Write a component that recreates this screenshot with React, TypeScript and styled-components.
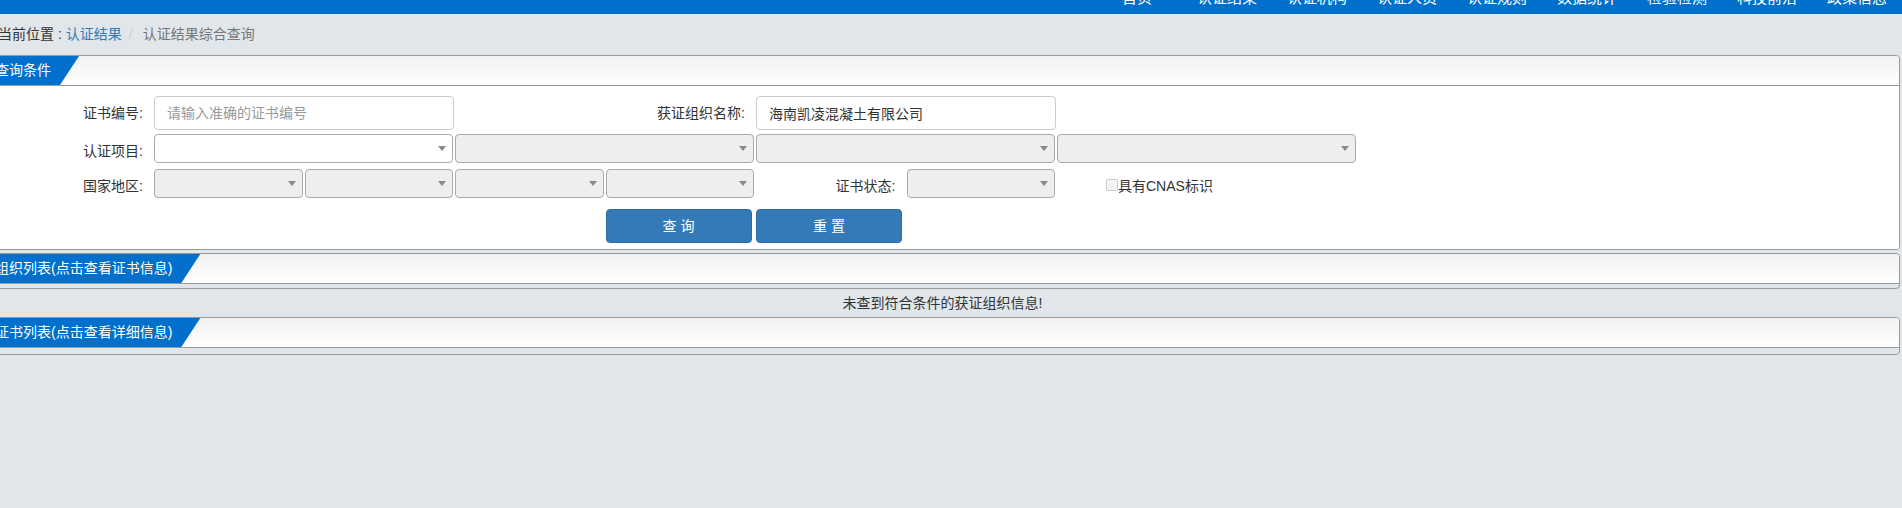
import React from "react";
import styled, { createGlobalStyle } from "styled-components";

const GlobalStyle = createGlobalStyle`
  html, body { margin: 0; padding: 0; background: #e1e6ea; overflow: hidden; }
  body {
    font-family: "Liberation Sans", "Noto Sans CJK SC", sans-serif;
    font-size: 14px;
    line-height: 20px;
    color: #333;
  }
  * { box-sizing: border-box; }
`;

const TopBar = styled.header`
  height: 14px;
  background: #0070cc;
  display: flex;
  justify-content: flex-end;
  overflow: hidden;
`;

const NavItem = styled.a`
  flex: 0 0 90px;
  text-align: center;
  color: #fff;
  font-size: 15px;
  line-height: 20px;
  margin-top: -12px;
  text-decoration: none;
  white-space: nowrap;
`;

const Wrapper = styled.div`
  margin: 0 2px 0 -15px;
`;

const Breadcrumb = styled.nav`
  height: 41px;
  padding: 0 0 2px 13px;
  display: flex;
  align-items: center;
  white-space: nowrap;
`;

const CrumbLead = styled.span`
  color: #333;
  margin-right: 4px;
`;

const CrumbLink = styled.a`
  color: #337ab7;
  text-decoration: none;
`;

const CrumbSep = styled.span`
  color: #ccc;
  padding: 0 5px 0 7px;
  margin-right: 5px;
`;

const CrumbCurrent = styled.span`
  color: #777;
`;

const Panel = styled.section<{ $gap?: number }>`
  border: 1px solid #999;
  border-radius: 4px;
  margin-top: ${(p) => p.$gap ?? 0}px;
  overflow: hidden;
`;

const PanelHeader = styled.div`
  height: 30px;
  border-bottom: 1px solid #999;
  background: linear-gradient(#f1f1f1, #fff);
  display: flex;
`;

const Tab = styled.div`
  background: #0070cc;
  color: #fff;
  line-height: 29px;
  height: 29px;
  padding: 0 28px 0 9px;
  white-space: nowrap;
  clip-path: polygon(0 0, 100% 0, calc(100% - 19px) 100%, 0 100%);
`;

const FormBody = styled.div`
  background: #fff;
  padding: 10px 0 6px 17.5px;
`;

const EmptyBody = styled.div<{ $h: number }>`
  height: ${(p) => p.$h}px;
`;

const FormRow = styled.div<{ $h: number; $mt?: number }>`
  display: grid;
  grid-template-columns: repeat(9, 150.5px);
  height: ${(p) => p.$h}px;
  margin-top: ${(p) => p.$mt ?? 0}px;
  align-items: start;
`;

const Cell = styled.div<{ $col: number; $span?: number }>`
  grid-column: ${(p) => p.$col} / span ${(p) => p.$span ?? 1};
  display: flex;
`;

const Label = styled.label<{ $col: number; $span?: number }>`
  grid-column: ${(p) => p.$col} / span ${(p) => p.$span ?? 1};
  text-align: right;
  padding: 7px 11px 0 0;
  line-height: 20px;
  color: #333;
  white-space: nowrap;
`;

const TextInput = styled.input`
  width: calc(100% - 1px);
  height: 34px;
  border: 1px solid #ccc;
  border-radius: 4px;
  padding: 6px 12px;
  font: inherit;
  color: #333;
  background: #fff;
  outline: none;
  &::placeholder { color: #999; }
`;

const SelectBox = styled.div<{ $disabled?: boolean }>`
  width: calc(100% - 2px);
  height: 29px;
  border: 1px solid #aaa;
  border-radius: 4px;
  background: ${(p) => (p.$disabled ? "#eee" : "#fff")};
  display: flex;
  align-items: center;
  justify-content: flex-end;
  padding-right: 6px;
`;

const Caret = styled.span`
  width: 0;
  height: 0;
  border-left: 4px solid transparent;
  border-right: 4px solid transparent;
  border-top: 5px solid #888;
`;

const CheckWrap = styled.label`
  grid-column: 8 / span 2;
  display: flex;
  align-items: flex-start;
  padding: 7px 0 0 49px;
  line-height: 20px;
  white-space: nowrap;
  color: #333;
`;

const CheckBox = styled.span`
  width: 12px;
  height: 12px;
  margin-top: 3px;
  border: 1px solid #c8c8c8;
  border-radius: 2px;
  background: #f4f4f4;
`;

const Button = styled.button`
  width: 146px;
  height: 34px;
  background: #337ab7;
  border: 1px solid #2e6da4;
  border-radius: 4px;
  color: #fff;
  font: inherit;
  padding: 0;
  cursor: pointer;
`;

const Message = styled.div`
  height: 28px;
  line-height: 28px;
  text-align: center;
  color: #333;
`;

const Select = ({ disabled }: { disabled?: boolean }) => (
  <SelectBox $disabled={disabled}>
    <Caret />
  </SelectBox>
);

const navItems = ["首页", "认证结果", "认证机构", "认证人员", "认证规则", "数据统计", "检验检测", "科技前沿", "政策信息"];

export default function App() {
  return (
    <>
      <GlobalStyle />
      <TopBar>
        {navItems.map((n) => (
          <NavItem key={n}>{n}</NavItem>
        ))}
      </TopBar>
      <Wrapper>
        <Breadcrumb>
          <CrumbLead>当前位置 :</CrumbLead>
          <CrumbLink>认证结果</CrumbLink>
          <CrumbSep>/</CrumbSep>
          <CrumbCurrent>认证结果综合查询</CrumbCurrent>
        </Breadcrumb>

        <Panel>
          <PanelHeader>
            <Tab>查询条件</Tab>
          </PanelHeader>
          <FormBody>
            <FormRow $h={34}>
              <Label $col={1}>证书编号:</Label>
              <Cell $col={2} $span={2}>
                <TextInput placeholder="请输入准确的证书编号" />
              </Cell>
              <Label $col={4} $span={2}>获证组织名称:</Label>
              <Cell $col={6} $span={2}>
                <TextInput defaultValue="海南凯凌混凝土有限公司" />
              </Cell>
            </FormRow>
            <FormRow $h={29} $mt={4}>
              <Label $col={1}>认证项目:</Label>
              <Cell $col={2} $span={2}><Select /></Cell>
              <Cell $col={4} $span={2}><Select disabled /></Cell>
              <Cell $col={6} $span={2}><Select disabled /></Cell>
              <Cell $col={8} $span={2}><Select disabled /></Cell>
            </FormRow>
            <FormRow $h={29} $mt={6}>
              <Label $col={1}>国家地区:</Label>
              <Cell $col={2}><Select disabled /></Cell>
              <Cell $col={3}><Select disabled /></Cell>
              <Cell $col={4}><Select disabled /></Cell>
              <Cell $col={5}><Select disabled /></Cell>
              <Label $col={6}>证书状态:</Label>
              <Cell $col={7}><Select disabled /></Cell>
              <CheckWrap>
                <CheckBox />
                具有CNAS标识
              </CheckWrap>
            </FormRow>
            <FormRow $h={34} $mt={11}>
              <Cell $col={5}><Button>查 询</Button></Cell>
              <Cell $col={6}><Button>重 置</Button></Cell>
            </FormRow>
          </FormBody>
        </Panel>

        <Panel $gap={3}>
          <PanelHeader>
            <Tab>组织列表(点击查看证书信息)</Tab>
          </PanelHeader>
          <EmptyBody $h={4} />
        </Panel>
        <Message>未查到符合条件的获证组织信息!</Message>
        <Panel>
          <PanelHeader>
            <Tab>证书列表(点击查看详细信息)</Tab>
          </PanelHeader>
          <EmptyBody $h={6} />
        </Panel>
      </Wrapper>
    </>
  );
}
